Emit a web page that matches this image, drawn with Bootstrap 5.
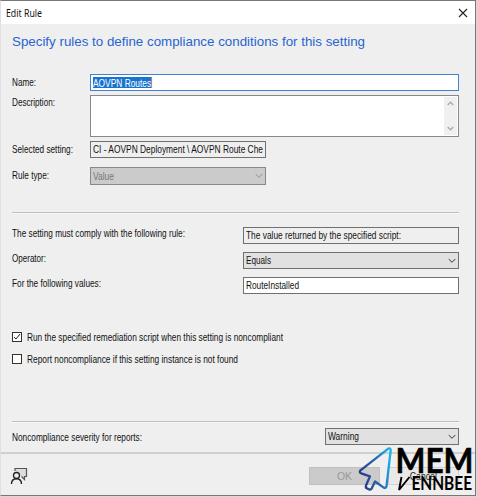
<!DOCTYPE html>
<html lang="en">
<head>
<meta charset="utf-8">
<meta name="viewport" content="width=device-width, initial-scale=1">
<title>Edit Rule</title>
<link href="https://cdn.jsdelivr.net/npm/bootstrap@5.3.0/dist/css/bootstrap.min.css" rel="stylesheet">
<style>
body{width:477px;height:497px;overflow:hidden;background:#d9d9d9;font-family:"Liberation Sans",Arial,sans-serif;font-size:10.5px;line-height:14px;color:#111;white-space:nowrap}
.dialog{width:476px;height:496px;background:#efefef;border:1px solid #777;border-left-color:#e0e0e0;border-right-color:#777}
.titlebar{height:23px;background:#fff;padding:0 7px 0 5px;font-family:"Noto Sans","Open Sans",sans-serif;font-size:10.5px}
.content-area{padding:0 16px 0 11px;height:428px}
.heading{height:50px;padding-top:9px;font-size:13.5px;line-height:18px;color:#2864cf}
.caption{width:78px;flex:none;padding-bottom:2px}
.caption-wide{width:231px;flex:none;margin-top:-1px}
.box{height:17px;border:1px solid #707070;border-radius:0;background:#fff;padding:0 2px;font-size:10.5px;line-height:15px;color:#111;overflow:hidden}
.box-ro{background:#efefef}
.box-select{background:#e1e1e1;height:17px}
.box-off{background:#cbcbcb;color:#777;height:18px;line-height:16px;border-color:#888}
.w-short{width:176px;flex:none}
.box-focus{border-color:#3f82d8}
[data-w]{display:inline-block;transform-origin:left center}
.push [data-w]{transform-origin:center}
.picked{background:#1874cf;color:#fff;height:11px;line-height:12px;border-right:1px solid #d9829a}
.memo{height:42px;padding:0;border-color:#888}
.scroller{width:13px;background:#f0f0f0;margin:1px}
.rule{height:2px;background:#bdbfbf;border-bottom:1px solid #f8f8f8}
.tick{width:10px;height:10px;border:1px solid #333;background:#fff;flex:none;margin-right:5px}
.footer-bar{border-top:2px solid #ced0cf;height:43px;padding:13px 16px 0 9px}
.push{width:71px;height:18px;line-height:16px;text-align:center;background:#cbcbcb;border:1px solid #c0c0c0;color:#989898;border-radius:0;padding:0;font-size:10.5px}
.push-light{background:#e9e9e9;color:#222;border-color:#d0d0d0}
.watermark{left:355px;top:443px}
.watermark svg{overflow:visible}
svg{display:block;flex:none}
</style>
</head>
<body>
<main class="dialog position-relative">
  <header class="titlebar d-flex align-items-center justify-content-between">
    <span data-w="36">Edit Rule</span>
    <svg width="10" height="10" viewBox="0 0 10 10"><path d="M1 1l8 8M9 1L1 9" stroke="#222" stroke-width="1.1"/></svg>
  </header>
  <div class="content-area">
    <div class="heading"><span data-w="353">Specify rules to define compliance conditions for this setting</span></div>
    <div class="d-flex align-items-center"><label class="caption"><span data-w="24">Name:</span></label><div class="box box-focus flex-grow-1 d-flex align-items-center"><span class="picked" data-w="59">AOVPN Routes</span></div></div>
    <div class="d-flex mt-1"><label class="caption"><span data-w="43">Description:</span></label>
      <div class="box memo flex-grow-1 d-flex justify-content-end"><div class="scroller d-flex flex-column justify-content-between align-items-center py-1">
        <svg width="7" height="5" viewBox="0 0 7 5"><path d="M.7 4L3.5 1.2 6.3 4" fill="none" stroke="#aaa" stroke-width="1.3"/></svg>
        <svg width="7" height="5" viewBox="0 0 7 5"><path d="M.7 1l2.8 2.8L6.3 1" fill="none" stroke="#aaa" stroke-width="1.3"/></svg>
      </div></div></div>
    <div class="d-flex align-items-center mt-1"><label class="caption"><span data-w="61">Selected setting:</span></label><div class="box box-ro w-short"><span data-w="170">CI - AOVPN Deployment \ AOVPN Route Che</span></div></div>
    <div class="d-flex align-items-center" style="margin-top:9px"><label class="caption"><span data-w="37">Rule type:</span></label><div class="box box-off w-short d-flex align-items-center justify-content-between"><span data-w="21">Value</span><svg width="8" height="6" viewBox="0 0 8 6"><path d="M.7 1L4 4.3 7.3 1" fill="none" stroke="#929292"/></svg></div></div>
    <div class="rule" style="margin-top:27px"></div>
    <div class="d-flex align-items-start" style="margin-top:13px"><span class="caption-wide"><span data-w="173">The setting must comply with the following rule:</span></span><div class="box box-ro flex-grow-1"><span data-w="155">The value returned by the specified script:</span></div></div>
    <div class="d-flex align-items-start mt-2"><label class="caption-wide"><span data-w="34">Operator:</span></label><div class="box box-select flex-grow-1 d-flex align-items-center justify-content-between"><span data-w="25">Equals</span><svg width="8" height="6" viewBox="0 0 8 6"><path d="M.7 1L4 4.3 7.3 1" fill="none" stroke="#333"/></svg></div></div>
    <div class="d-flex align-items-start mt-2"><label class="caption-wide"><span data-w="89">For the following values:</span></label><div class="box flex-grow-1"><span data-w="53">RouteInstalled</span></div></div>
    <div class="d-flex align-items-center" style="margin-top:36px"><span class="tick"><svg width="8" height="8" viewBox="0 0 8 8"><path d="M1 4l2 2 4-5" fill="none" stroke="#222"/></svg></span><span data-w="256">Run the specified remediation script when this setting is noncompliant</span></div>
    <div class="d-flex align-items-center mt-2"><span class="tick"></span><span data-w="211">Report noncompliance if this setting instance is not found</span></div>
    <div class="rule" style="margin-top:55px"></div>
    <div class="d-flex align-items-center justify-content-between" style="margin-top:5px"><label><span data-w="130">Noncompliance severity for reports:</span></label><div class="box box-select d-flex align-items-center justify-content-between" style="width:134px"><span data-w="31">Warning</span><svg width="8" height="6" viewBox="0 0 8 6"><path d="M.7 1L4 4.3 7.3 1" fill="none" stroke="#333"/></svg></div></div>
  </div>
  <footer class="footer-bar d-flex align-items-start justify-content-between">
    <svg width="18" height="18" viewBox="0 0 18 18"><path d="M5 4V1.5h11.500v8h-2v3l-3-3" fill="#ddd" stroke="#555" stroke-width="1.2"/><circle cx="6.500" cy="8.500" r="3" fill="#efefef" stroke="#222" stroke-width="1.3"/><path d="M1.500 17c0-3.400 2-5.300 5-5.300s5 1.900 5 5.300" fill="none" stroke="#222" stroke-width="1.4"/></svg>
    <div class="d-flex gap-2"><button class="push" disabled><span>OK</span></button><button class="push push-light"><span data-w="27">Cancel</span></button></div>
  </footer>
  <div class="watermark position-absolute pe-none">
    <svg width="120" height="52" viewBox="356 444 120 52">
      <defs><linearGradient id="arrowBlue" x1="0" x2="1" y1=".6" y2=".3"><stop stop-color="#273985"/><stop offset=".55" stop-color="#2865b3"/><stop offset="1" stop-color="#16b1ec"/></linearGradient></defs>
      <path d="M388 448.800L360.500 470.300Q358.800 472.300 361.200 473.300L370 476.300 366 485.500Q365.300 487.600 367.200 488.500L369.200 489.400Q371 490 371.800 488.300L375 481.500 383.800 487.600Q386 488.700 386.500 486.300L390.700 450.300Q390.500 447.300 388 448.800z" fill="none" stroke="url(#arrowBlue)" stroke-width="2.3" stroke-linejoin="round"/>
      <text x="395.500" y="473" font-family="Lato, sans-serif" font-weight="700" font-size="33.5" stroke="#000" stroke-width=".5" textLength="78" lengthAdjust="spacingAndGlyphs">MEM</text>
      <path d="M401.500 477l-2.500 13 10.500-13" fill="none" stroke="#000" stroke-width="1.9"/>
      <text x="411.500" y="490" font-family="Lato, sans-serif" font-weight="700" font-size="18.5" textLength="60.5" lengthAdjust="spacingAndGlyphs">ENNBEE</text>
    </svg>
  </div>
</main>
<script src="https://cdn.jsdelivr.net/npm/bootstrap@5.3.0/dist/js/bootstrap.bundle.min.js"></script>
<script>
// Condense each label to its compact dialog width.
document.querySelectorAll('[data-w]').forEach(el => {
  el.style.transform = 'scaleX(' + Number(el.dataset.w) / el.getBoundingClientRect().width + ')';
});
</script>
</body>
</html>
